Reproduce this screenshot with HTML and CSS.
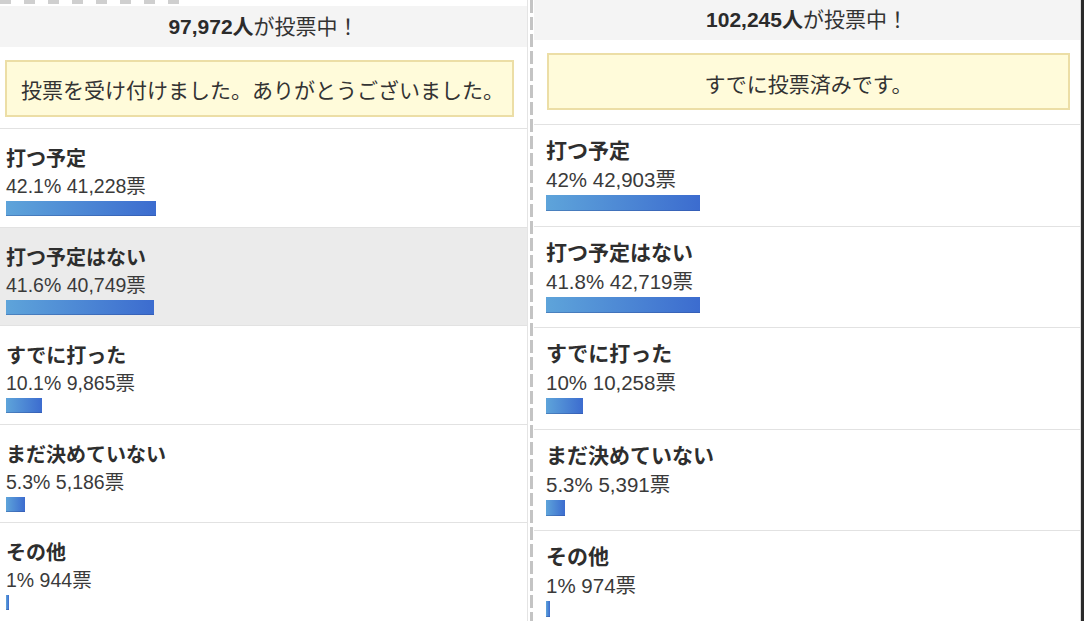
FILE: index.html
```html
<!DOCTYPE html>
<html lang="ja">
<head>
<meta charset="utf-8">
<title>投票結果</title>
<link rel="stylesheet" href="styles.css">
</head>
<body>
<div class="page">
  <section class="panel panel-a">
    <div class="dashes"><div class="dash-strip"></div></div>
    <div class="head"><b>97,972人</b>が投票中！</div>
    <div class="notice">投票を受け付けました。ありがとうございました。</div>
    <ul class="opts">
      <li class="opt">
        <div class="lbl">打つ予定</div>
        <div class="stat">42.1% 41,228票</div>
        <div class="bar" style="width:150px"></div>
      </li>
      <li class="opt opt-sel">
        <div class="lbl">打つ予定はない</div>
        <div class="stat">41.6% 40,749票</div>
        <div class="bar" style="width:148px"></div>
      </li>
      <li class="opt">
        <div class="lbl">すでに打った</div>
        <div class="stat">10.1% 9,865票</div>
        <div class="bar" style="width:36px"></div>
      </li>
      <li class="opt">
        <div class="lbl">まだ決めていない</div>
        <div class="stat">5.3% 5,186票</div>
        <div class="bar" style="width:19px"></div>
      </li>
      <li class="opt">
        <div class="lbl">その他</div>
        <div class="stat">1% 944票</div>
        <div class="bar" style="width:3px"></div>
      </li>
    </ul>
  </section>
  <div class="sep"><div class="sep-line"></div></div>
  <section class="panel panel-b">
    <div class="head"><b>102,245人</b>が投票中！</div>
    <div class="notice">すでに投票済みです。</div>
    <ul class="opts">
      <li class="opt">
        <div class="lbl">打つ予定</div>
        <div class="stat">42% 42,903票</div>
        <div class="bar" style="width:154px"></div>
      </li>
      <li class="opt">
        <div class="lbl">打つ予定はない</div>
        <div class="stat">41.8% 42,719票</div>
        <div class="bar" style="width:154px"></div>
      </li>
      <li class="opt">
        <div class="lbl">すでに打った</div>
        <div class="stat">10% 10,258票</div>
        <div class="bar" style="width:37px"></div>
      </li>
      <li class="opt">
        <div class="lbl">まだ決めていない</div>
        <div class="stat">5.3% 5,391票</div>
        <div class="bar" style="width:19px"></div>
      </li>
      <li class="opt">
        <div class="lbl">その他</div>
        <div class="stat">1% 974票</div>
        <div class="bar" style="width:4px"></div>
      </li>
    </ul>
  </section>
  <div class="edge"></div>
</div>
</body>
</html>
```
FILE: styles.css
```css
html, body {
  margin: 0;
  padding: 0;
  background: #fff;
}
body {
  font-family: "Liberation Sans", "Noto Sans CJK JP", sans-serif;
  color: #333;
}
.page {
  display: flex;
  width: 1084px;
  height: 621px;
  overflow: hidden;
}
.panel {
  display: flex;
  flex-direction: column;
  background: #fff;
}
.panel-a {
  width: 527px;
  border-right: 1px solid #e4e4e4;
}
.panel-b {
  width: 546px;
  border-right: 1px solid #dcdcdc;
}
.dashes {
  height: 6px;
  flex: none;
}
.dash-strip {
  width: 180px;
  height: 4px;
  background: repeating-linear-gradient(to right, #cfcfcf 0 11px, transparent 11px 24px);
}
.head {
  flex: none;
  background: #f4f4f4;
  text-align: center;
  font-size: 21px;
  color: #333;
}
.head b {
  font-weight: 700;
  color: #2b2b2b;
}
.panel-a .head {
  height: 41px;
  line-height: 41px;
}
.panel-b .head {
  height: 40px;
  line-height: 39px;
}
.notice {
  flex: none;
  box-sizing: border-box;
  height: 57px;
  margin-top: 13px;
  background: #fffbda;
  border: 2px solid #ecdea6;
  font-size: 21px;
  color: #333;
  display: flex;
  align-items: center;
}
.panel-a .notice {
  margin-left: 5px;
  margin-right: 13px;
  padding-left: 14px;
}
.panel-b .notice {
  margin-left: 13px;
  margin-right: 10px;
  justify-content: center;
  padding-top: 3px;
}
.opts {
  list-style: none;
  margin: 0;
  padding: 0;
}
.panel-a .opts {
  margin-top: 11px;
}
.panel-b .opts {
  margin-top: 14px;
}
.opt {
  box-sizing: border-box;
  border-top: 1px solid #e2e2e2;
}
.opt-sel {
  background: #ebebeb;
}
.lbl {
  font-weight: 700;
  color: #2e2e2e;
}
.stat {
  color: #3a3a3a;
}
.bar {
  background: linear-gradient(to right, #5ea4da, #3c6ccf);
  box-shadow: inset 0 -1px 0 rgba(40, 70, 140, 0.35);
}
.panel-a .opt {
  height: 98.5px;
  padding: 17px 0 0 6px;
}
.panel-a .lbl {
  font-size: 20px;
  line-height: 26px;
}
.panel-a .stat {
  font-size: 19.5px;
  line-height: 28px;
}
.panel-a .bar {
  height: 15px;
  margin-top: 1px;
}
.panel-b .opt {
  height: 101.5px;
  padding: 12px 0 0 12px;
}
.panel-b .lbl {
  font-size: 21px;
  line-height: 28px;
}
.panel-b .stat {
  font-size: 20.5px;
  line-height: 30px;
}
.panel-b .bar {
  height: 16px;
  margin-top: 0;
}
.sep {
  width: 6px;
  flex: none;
}
.sep-line {
  width: 3px;
  height: 100%;
  margin-left: 2px;
  background: repeating-linear-gradient(to bottom, #c4c4c4 0 13px, transparent 13px 17px);
}
.edge {
  flex: none;
  width: 3px;
  background: #2a2a2a;
}
```
